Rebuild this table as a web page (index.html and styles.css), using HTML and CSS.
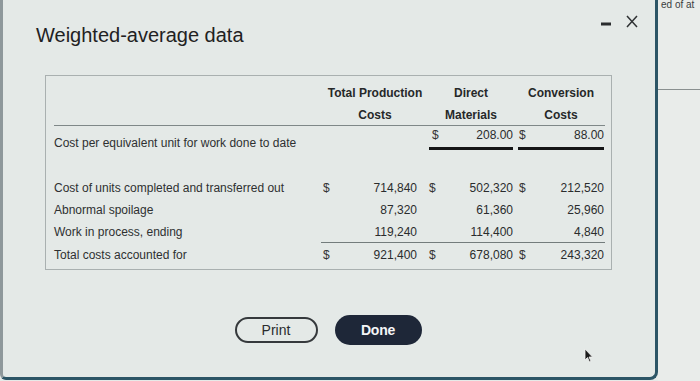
FILE: index.html
```html
<!DOCTYPE html>
<html>
<head>
<meta charset="utf-8">
<link rel="stylesheet" href="styles.css">
</head>
<body>
<div class="page">
  <div class="dialog">
    <div class="head">
      <h1 class="title">Weighted-average data</h1>
      <div class="controls">
        <svg class="min" width="10" height="4" viewBox="0 0 10 4"><rect x="0" y="0.5" width="10" height="3" fill="#2a2d2f"/></svg>
        <svg class="close" width="12" height="13" viewBox="0 0 12 13"><path d="M1 1 L11 12 M11 1 L1 12" stroke="#2f3234" stroke-width="1.5" fill="none"/></svg>
      </div>
    </div>
    <div class="box">
      <div class="grid">
        <div class="hd r1 span-a">Total Production</div>
        <div class="hd r1 span-b">Direct</div>
        <div class="hd r1 span-c">Conversion</div>
        <div class="hd r2 span-a">Costs</div>
        <div class="hd r2 span-b">Materials</div>
        <div class="hd r2 span-c">Costs</div>
        <div class="hline"></div>

        <div class="lbl lbl-low r3">Cost per equivalent unit for work done to date</div>
        <div class="dol d2 r3 top">$</div>
        <div class="num n2 r3 top">208.00</div>
        <div class="dol d3 r3 top">$</div>
        <div class="num n3 r3 top">88.00</div>
        <div class="uline ul-b"></div>
        <div class="uline ul-c"></div>

        <div class="lbl r5">Cost of units completed and transferred out</div>
        <div class="dol d1 r5">$</div>
        <div class="num n1 r5">714,840</div>
        <div class="dol d2 r5">$</div>
        <div class="num n2 r5">502,320</div>
        <div class="dol d3 r5">$</div>
        <div class="num n3 r5">212,520</div>

        <div class="lbl r6">Abnormal spoilage</div>
        <div class="num n1 r6">87,320</div>
        <div class="num n2 r6">61,360</div>
        <div class="num n3 r6">25,960</div>

        <div class="lbl r7">Work in process, ending</div>
        <div class="num n1 r7">119,240</div>
        <div class="num n2 r7">114,400</div>
        <div class="num n3 r7">4,840</div>
        <div class="tline"></div>

        <div class="lbl r8">Total costs accounted for</div>
        <div class="dol d1 r8">$</div>
        <div class="num n1 r8">921,400</div>
        <div class="dol d2 r8">$</div>
        <div class="num n2 r8">678,080</div>
        <div class="dol d3 r8">$</div>
        <div class="num n3 r8">243,320</div>
      </div>
    </div>
    <div class="actions">
      <button class="btn btn-print">Print</button>
      <button class="btn btn-done">Done</button>
    </div>
    <svg class="cursor" width="10" height="15" viewBox="0 0 10 15"><path d="M1 1 L1 12 L3.5 9.5 L5.5 14 L7 13.3 L5 9 L8.5 9 Z" fill="#1b1b1b" stroke="#f2f2f2" stroke-width="0.8"/></svg>
  </div>
  <div class="side">
    <div class="side-text">ed of at</div>
    <div class="side-line"></div>
  </div>
</div>
</body>
</html>
```
FILE: styles.css
```css
* { box-sizing: border-box; }
html, body {
  margin: 0;
  padding: 0;
  width: 700px;
  height: 381px;
  overflow: hidden;
  background: #e6eae8;
  font-family: "Liberation Sans", Arial, sans-serif;
  color: #2a2c2d;
}
.page {
  display: flex;
  height: 381px;
}
.dialog {
  position: relative;
  width: 658px;
  height: 380px;
  flex: none;
  background: #e4e9e7;
  border-left: 3px solid #8e989b;
  border-right: 3px solid #2c5566;
  border-bottom: 3px solid #2c5566;
  border-bottom-left-radius: 6px;
  border-bottom-right-radius: 8px;
  display: flex;
  flex-direction: column;
}
.head {
  display: flex;
  justify-content: space-between;
  align-items: flex-start;
  padding: 0 17px 0 33px;
}
.title {
  margin: 23px 0 0 0;
  font-size: 20px;
  line-height: 24px;
  font-weight: normal;
  color: #1f2122;
}
.controls {
  display: flex;
  align-items: center;
  gap: 15px;
  margin-top: 15px;
}
.min { margin-top: 5px; }
.box {
  margin: 28px 0 0 42px;
  width: 567px;
  border: 1px solid #a9b0b0;
  padding: 6px 7px 3px 8px;
}
.grid {
  display: grid;
  grid-template-columns: 265px 12px 94px 16px 76px 12px 76px;
  grid-template-rows: 22px 22px 26px 24px 23px 22px 22px 23px;
  font-size: 12px;
  line-height: 16px;
  align-items: center;
}
.hd {
  font-weight: bold;
  text-align: center;
  color: #262829;
}
.r1 { grid-row: 1; }
.r2 { grid-row: 2; }
.r3 { grid-row: 3; }
.r5 { grid-row: 5; }
.r6 { grid-row: 6; }
.r7 { grid-row: 7; }
.r8 { grid-row: 8; }
.span-a { grid-column: 2 / 4; padding-left: 6px; }
.span-b { grid-column: 4 / 6; }
.span-c { grid-column: 6 / 8; }
.hline {
  grid-row: 2;
  grid-column: 1 / -1;
  align-self: end;
  height: 1px;
  background: #7f8888;
}
.lbl {
  grid-column: 1;
  color: #2e3031;
}
.lbl-low { align-self: end; margin-bottom: 1px; }
.top { align-self: start; margin-top: 1px; }
.dol { color: #333; }
.d1 { grid-column: 2; padding-left: 4px; }
.d2 { grid-column: 4; padding-left: 4px; }
.d3 { grid-column: 6; padding-left: 2px; }
.num { text-align: right; }
.n1 { grid-column: 3; padding-right: 8px; }
.n2 { grid-column: 5; padding-right: 4px; }
.n3 { grid-column: 7; padding-right: 1px; }
.r3.d2 { padding-left: 7px; }
.uline {
  grid-row: 3;
  align-self: end;
  height: 3px;
  margin-bottom: 2px;
  background: #141516;
}
.ul-b { grid-column: 4 / 6; margin-left: 4px; margin-right: 4px; }
.ul-c { grid-column: 6 / 8; margin-left: 1px; margin-right: 1px; }
.tline {
  grid-row: 7;
  grid-column: 2 / -1;
  align-self: end;
  height: 1px;
  margin-left: 2px;
  background: #737c7c;
}
.actions {
  display: flex;
  justify-content: center;
  align-items: center;
  gap: 17px;
  margin-top: 45px;
  padding-right: 2px;
}
.btn {
  font-family: "Liberation Sans", Arial, sans-serif;
  font-size: 14px;
  border-radius: 15px;
  cursor: pointer;
}
.btn-print {
  width: 83px;
  height: 26px;
  background: transparent;
  border: 2px solid #35393c;
  color: #2a2c2d;
}
.btn-done {
  width: 87px;
  height: 30px;
  background: #1e2738;
  border: none;
  color: #f4f6f7;
  font-weight: bold;
  letter-spacing: -0.2px;
}
.cursor {
  position: absolute;
  left: 581px;
  top: 348px;
}
.side {
  flex: 1;
  background: #e9ecea;
  position: relative;
  overflow: hidden;
}
.side-text {
  margin: 0 0 0 3px;
  font-size: 10px;
  line-height: 9px;
  color: #3a3c3d;
  white-space: nowrap;
}
.side-line {
  margin-top: 80px;
  height: 1px;
  background: #8a9090;
}
```
